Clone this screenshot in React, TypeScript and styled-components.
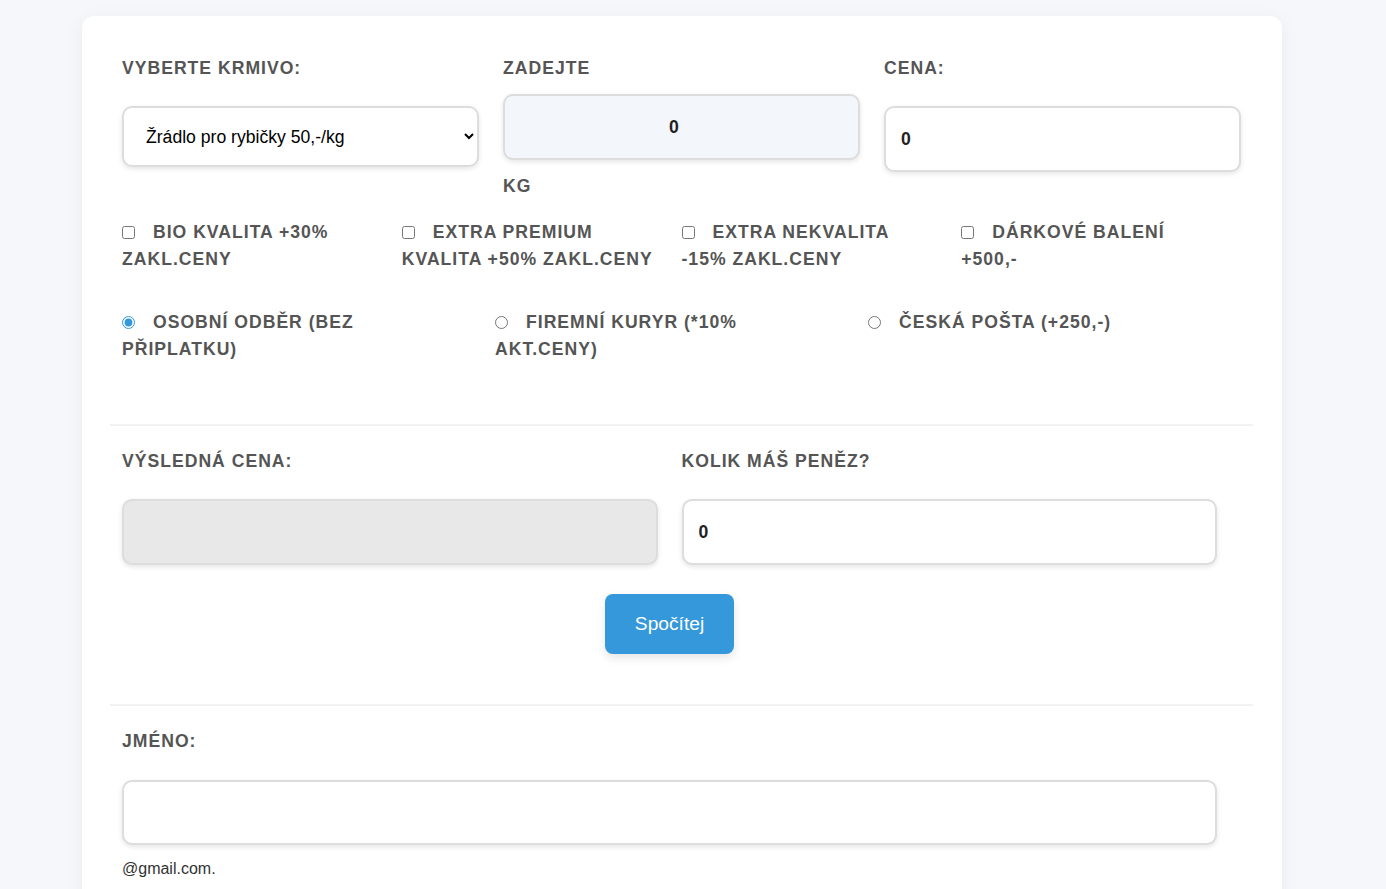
import React, {useState} from 'react';
import styled, {createGlobalStyle} from 'styled-components';

const GlobalStyle = createGlobalStyle`
  body {
    margin: 0;
    background: #f5f7fa;
    font-family: "Liberation Sans", Arial, sans-serif;
    color: #333;
  }
`;

const extras = [
  {key: 'bio', label: 'Bio kvalita +30% zakl.ceny'},
  {key: 'premium', label: 'Extra premium kvalita +50% zakl.ceny'},
  {key: 'nekvalita', label: 'Extra nekvalita -15% zakl.ceny'},
  {key: 'darek', label: 'Dárkové balení +500,-'},
];

const deliveries = [
  {key: 'osobni', label: 'Osobní odběr (bez připlatku)'},
  {key: 'kuryr', label: 'Firemní kuryr (*10% akt.ceny)'},
  {key: 'posta', label: 'Česká pošta (+250,-)'},
];

const App = () => {
  const [delivery, setDelivery] = useState('osobni');
  const [checked, setChecked] = useState<Record<string, boolean>>({});

  return (
    <>
      <GlobalStyle />
      <Page>
        <Card>
          <Columns>
            <Column>
              <Label>Vyberte krmivo:</Label>
              <Select $offset defaultValue="ryby">
                <option value="ryby">Žrádlo pro rybičky 50,-/kg</option>
                <option value="psi">Granule pro psy 80,-/kg</option>
                <option value="kocky">Granule pro kočky 70,-/kg</option>
              </Select>
            </Column>
            <Column>
              <Label>Zadejte</Label>
              <Input type="number" $centered $height={66} defaultValue="0" />
              <Unit>kg</Unit>
            </Column>
            <Column>
              <Label>Cena:</Label>
              <Input type="number" $offset $height={66} defaultValue="0" />
            </Column>
          </Columns>

          <OptionGrid $cols={4} $top={10}>
            {extras.map(({key, label}) => (
              <Option key={key}>
                <Checkbox
                  type="checkbox"
                  checked={!!checked[key]}
                  onChange={() => setChecked({...checked, [key]: !checked[key]})}
                />
                {label}
              </Option>
            ))}
          </OptionGrid>

          <OptionGrid $cols={3} $top={36}>
            {deliveries.map(({key, label}) => (
              <Option key={key}>
                <Checkbox
                  type="radio"
                  name="doprava"
                  checked={delivery === key}
                  onChange={() => setDelivery(key)}
                />
                {label}
              </Option>
            ))}
          </OptionGrid>

          <Divider $top={61} />

          <Section>
            <Columns>
              <Column>
                <Label>Výsledná cena:</Label>
                <Input $offset $height={66} $disabled readOnly />
              </Column>
              <Column>
                <Label>Kolik máš peněz?</Label>
                <Input type="number" $offset $height={66} defaultValue="0" />
              </Column>
            </Columns>
            <ButtonRow>
              <Button type="button">Spočítej</Button>
            </ButtonRow>
          </Section>

          <Divider $top={50} />

          <Section>
            <Column>
              <Label>Jméno:</Label>
              <Input $offset $height={65} $gap={13} />
              <Hint>@gmail.com.</Hint>
            </Column>
          </Section>
        </Card>
      </Page>
    </>
  );
};

const Page = styled.div`
  padding: 16px 22px 0 0;
`;

const Card = styled.div`
  max-width: 1200px;
  margin: 0 auto;
  box-sizing: border-box;
  background: #fff;
  border-radius: 12px;
  padding: 30px 29px 28px 28px;
  box-shadow: 0 4px 20px rgba(0, 0, 0, 0.05);
  min-height: 900px;
`;

const Columns = styled.div`
  display: flex;
`;

const Column = styled.div`
  flex: 1;
  min-width: 0;
  padding: 12px;
  display: flex;
  flex-direction: column;
`;

const Label = styled.label`
  display: block;
  font-size: 17.6px;
  line-height: 21px;
  font-weight: 700;
  letter-spacing: 1px;
  text-transform: uppercase;
  color: #555;
  margin-bottom: 15px;
`;

const Unit = styled(Label)`
  margin: 16px 0 0;
`;

const fieldBase = `
  box-sizing: border-box;
  width: 100%;
  border: 2px solid #ddd;
  border-radius: 10px;
  box-shadow: 0 2px 5px rgba(0, 0, 0, 0.1);
  font-family: "Liberation Sans", Arial, sans-serif;
  font-size: 17.6px;
  outline: none;
`;

const Select = styled.select<{$offset?: boolean}>`
  ${fieldBase};
  height: 61px;
  margin-top: ${({$offset}) => ($offset ? '12px' : '0')};
  padding: 0 8px 0 18px;
  background: #fff;
  color: #000;
`;

const Input = styled.input<{
  $offset?: boolean;
  $centered?: boolean;
  $disabled?: boolean;
  $height: number;
  $gap?: number;
}>`
  ${fieldBase};
  height: ${({$height}) => $height}px;
  margin-top: ${({$offset, $gap}) => ($offset ? `${$gap ?? 12}px` : '0')};
  padding: 0 15px;
  font-weight: 700;
  color: #222;
  text-align: ${({$centered}) => ($centered ? 'center' : 'left')};
  background: ${({$centered, $disabled}) => ($disabled ? '#e8e8e8' : $centered ? '#f3f6fa' : '#fff')};
`;

const OptionGrid = styled.div<{$cols: number; $top: number}>`
  display: grid;
  grid-template-columns: repeat(${({$cols}) => $cols}, 1fr);
  padding: 0 12px;
  margin-top: ${({$top}) => $top}px;
`;

const Option = styled.label`
  max-width: 254px;
  font-size: 17.6px;
  line-height: 27px;
  font-weight: 700;
  letter-spacing: 1px;
  text-transform: uppercase;
  color: #555;
  cursor: pointer;
`;

const Checkbox = styled.input`
  width: 13px;
  height: 13px;
  margin: 0 18px 0 0;
  vertical-align: -1px;
  accent-color: #3498db;
`;

const Divider = styled.div<{$top: number}>`
  height: 2px;
  background: #f2f2f2;
  margin-top: ${({$top}) => $top}px;
`;

const Section = styled.div`
  padding: 13px 24px 0 0;
`;

const ButtonRow = styled.div`
  display: flex;
  justify-content: center;
  margin-top: 17px;
`;

const Button = styled.button`
  height: 60px;
  padding: 0 30px;
  border: none;
  border-radius: 8px;
  background: #3498db;
  color: #fff;
  font-family: "Liberation Sans", Arial, sans-serif;
  font-size: 19.2px;
  box-shadow: 0 4px 10px rgba(0, 0, 0, 0.1);
  cursor: pointer;
`;

const Hint = styled.div`
  margin-top: 15px;
  font-size: 16px;
  color: #333;
`;

export default App;
